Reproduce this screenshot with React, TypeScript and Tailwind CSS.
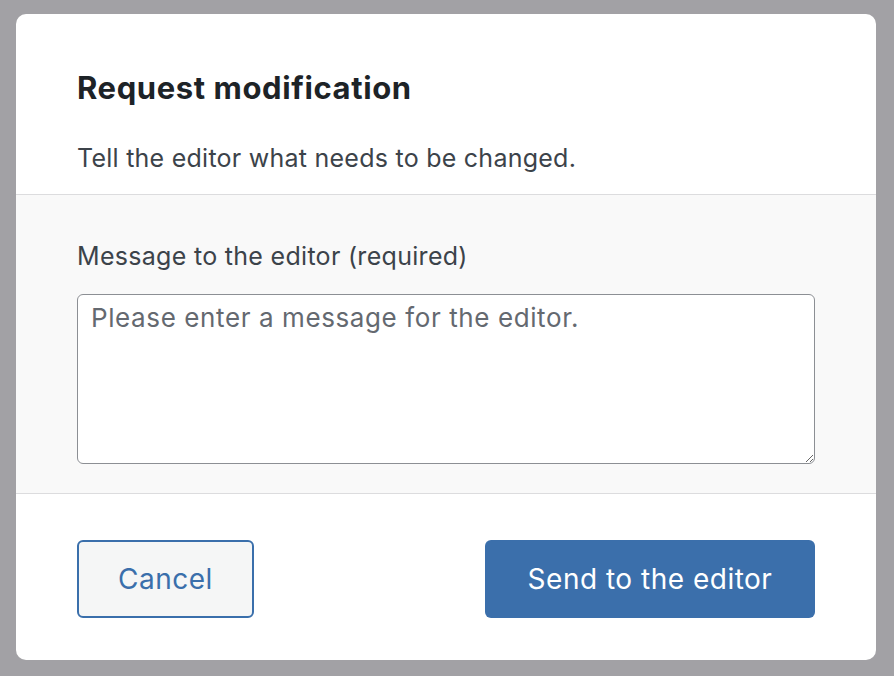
import React from 'react';

const App: React.FC = () => {
  return (
    <div className="min-h-screen w-full bg-[#a2a1a5] px-[16px] pt-[14px] pb-[16px] font-['Inter',sans-serif]">
      <div className="w-[860px] h-[646px] bg-white rounded-[10px] overflow-hidden flex flex-col">
        {/* Header */}
        <div className="px-[61px] pt-[56px] h-[181px] border-b border-[#dcdcde]">
          <h1 className="text-[31px] leading-[36px] font-bold tracking-[0.6px] text-[#1d2327]">Request modification</h1>
          <p className="mt-[37px] text-[25px] leading-[30px] tracking-[0.25px] text-[#3c434a]">Tell the editor what needs to be changed.</p>
        </div>

        {/* Body */}
        <div className="bg-[#f9f9f9] px-[61px] pt-[46px] h-[299px] border-b border-[#dcdcde]">
          <label className="block text-[25px] leading-[30px] tracking-[0.3px] text-[#3c434a]">Message to the editor (required)</label>
          <textarea
            className="mt-[23px] block w-full h-[170px] bg-white border border-[#8c8f94] rounded-[6px] px-[13px] py-[8px] text-[26px] leading-[30px] tracking-[0.6px] text-[#2c3338] placeholder:text-[#646970] outline-none resize-y"
            placeholder="Please enter a message for the editor."
          />
        </div>

        {/* Footer */}
        <div className="flex-1 px-[61px] flex items-start justify-between pt-[46px]">
          <button className="w-[177px] h-[78px] rounded-[6px] border-2 border-[#3a6fab] bg-[#f5f6f6] text-[#3a6fab] text-[28px] tracking-[0.5px]">
            Cancel
          </button>
          <button className="w-[330px] h-[78px] rounded-[6px] bg-[#3b6fab] text-white text-[28px] tracking-[0.5px]">
            Send to the editor
          </button>
        </div>
      </div>
    </div>
  );
};

export default App;
